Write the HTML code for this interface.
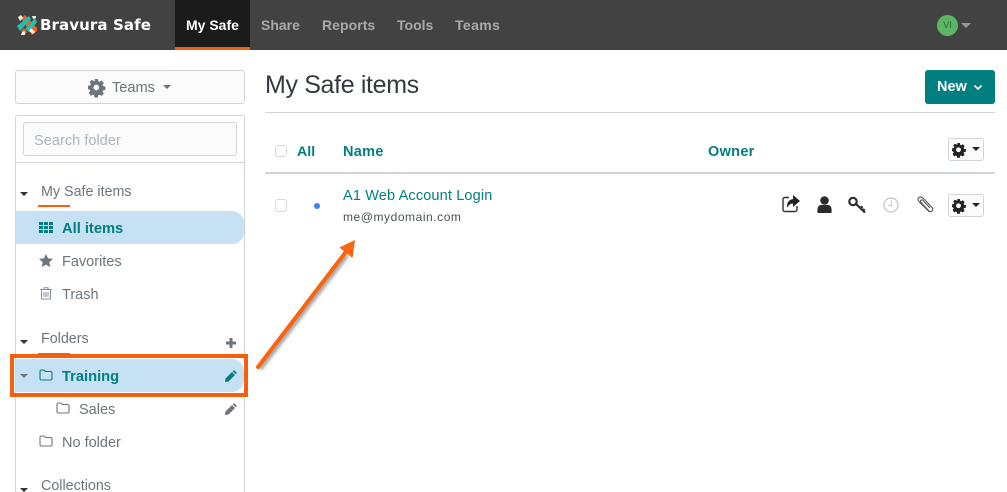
<!DOCTYPE html>
<html><head><meta charset="utf-8"><style>
html,body{margin:0;padding:0;width:1007px;height:492px;overflow:hidden;background:#fff}
body{position:relative;font-family:"Liberation Sans",sans-serif;font-size:15px;color:#6c757d}
.a{position:absolute;white-space:nowrap}
svg{position:absolute;overflow:visible}
.t{line-height:20px}
.teal{color:#017e80}
.b{font-weight:700}
.cb{position:absolute;width:10px;height:10px;border:1.500px solid #d5d9de;border-radius:3px;background:#fff}
.caret{position:absolute;width:0;height:0;border-left:4.5px solid transparent;border-right:4.5px solid transparent;border-top:4.5px solid #333}
</style></head><body>
<div class="a" style="left:0;top:0;width:1007px;height:50px;background:#424242"></div>
<div class="a" style="left:175px;top:0;width:75px;height:50px;background:#1b1b1b"></div>
<div class="a" style="left:175px;top:47px;width:75px;height:3px;background:#f5600f"></div>
<svg style="left:16px;top:14px" width="22" height="22" viewBox="0 0 22 22">
<path d="M5 4 L9 1 L21 14 L21 17 L16 21 Z" fill="#f4621f"/>
<path d="M1 12 L13 2 L15 5 L4 17 Z" fill="#1cc1b5"/>
<path d="M9 15 L19 4 L21 8 L13 18 Z" fill="#1cc1b5"/>
<path d="M5 17 L8 14 L11 18 L9 21 Z" fill="#f4621f"/>
<path d="M2 3 L5 1 L7 4 L4 7 Z M6 18 L9 17 L9 21 L5 21 Z M16 2 L20 2 L20 4 L17 5 Z M15 14 L19 18 L17 20 L13 17 Z" fill="#fff" opacity=".9"/>
</svg>
<div class="a t" style="left:40px;top:15px;color:#fff;font-family:'DejaVu Sans',sans-serif;font-size:15px;font-weight:700;letter-spacing:.1px">Bravura Safe</div>
<div class="a t b" style="left:186px;top:15px;color:#fff;font-size:14px;">My Safe</div>
<div class="a t b" style="left:261px;top:15px;color:#aaa;font-size:14px">Share</div>
<div class="a t b" style="left:322px;top:15px;color:#aaa;font-size:14px;letter-spacing:.05px">Reports</div>
<div class="a t b" style="left:397px;top:15px;color:#aaa;font-size:14px">Tools</div>
<div class="a t b" style="left:455px;top:15px;color:#aaa;font-size:14px;letter-spacing:.4px">Teams</div>
<div class="a" style="left:937px;top:15px;width:21px;height:21px;border-radius:50%;background:#5cb563;color:#2f6b36;font-size:9px;line-height:21px;text-align:center">VI</div>
<div class="caret" style="left:961px;top:23px;border-top-color:#999;border-left-width:5px;border-right-width:5px;border-top-width:5px"></div>

<div class="a" style="left:15px;top:70px;width:228px;height:32px;border:1px solid #ced4da;border-radius:3px;background:#fbfbfb"></div>
<svg style="left:88px;top:79px" width="17" height="17" viewBox="0 0 24 24"><path fill="#6c757d" d="M9.500 0h5l.6 3.400 2 .8 2.800-2 3.500 3.500-2 2.800.8 2 3.400.6v5l-3.400.6-.8 2 2 2.800-3.500 3.500-2.800-2-2 .8-.6 3.400h-5l-.6-3.400-2-.8-2.800 2L1.200 20.400l2-2.800-.8-2L0 15v-5l3.400-.6.8-2-2-2.800L5.700 1.100l2.800 2 2-.8z" transform="scale(.96)"/><circle cx="11.700" cy="12" r="4" fill="#fbfbfb"/></svg>
<div class="a t" style="left:112px;top:78px;font-size:14.6px">Teams</div>
<div class="caret" style="left:163px;top:85px;border-top-color:#6c757d"></div>

<div class="a" style="left:15px;top:115px;width:228px;height:377px;border:1px solid #ced4da;border-bottom:0;border-radius:3px 3px 0 0"></div>
<div class="a" style="left:16px;top:162px;width:228px;height:1px;background:#ced4da"></div>
<div class="a" style="left:23px;top:122px;width:212px;height:32px;border:1px solid #ced4da;border-radius:3px;background:#fbfbfb"></div>
<div class="a t" style="left:34px;top:131px;font-size:14.5px;color:#adb5bd;letter-spacing:.05px">Search folder</div>

<div class="caret" style="left:20px;top:192px"></div>
<div class="a t" style="left:41px;top:182px;font-size:14.3px;">My Safe items</div>
<div class="a" style="left:38px;top:205px;width:32px;height:2px;background:#f5600f"></div>
<div class="a" style="left:16px;top:211px;width:228px;height:33px;background:#c7e1f4;border-radius:0 12px 12px 0"></div>
<svg style="left:39px;top:222px" width="14" height="12"><path fill="#017e80" d="M0 0h4v3H0zM5 0h4v3H5zM10 0h4v3h-4zM0 4h4v3H0zM5 4h4v3H5zM10 4h4v3h-4zM0 8h4v3H0zM5 8h4v3H5zM10 8h4v3h-4z"/></svg>
<div class="a t b teal" style="left:62px;top:219px;font-size:14.7px">All items</div>
<svg style="left:39px;top:254px" width="14" height="13" viewBox="0 0 14 13"><path fill="#6c757d" d="M7 0l2 4.400 5 .5-3.700 3.300 1 4.800L7 10.600 2.700 13l1-4.800L0 4.900l5-.5z"/></svg>
<div class="a t" style="left:62px;top:252px;font-size:14.5px">Favorites</div>
<svg style="left:40px;top:287px" width="12" height="13" viewBox="0 0 12 13"><path fill="none" stroke="#8a939b" d="M1.500 3v9h9V3M0 2.500h12M4 2.500V.8h4v1.700M4 5v5M6 5v5M8 5v5"/></svg>
<div class="a t" style="left:62px;top:285px;font-size:14.5px">Trash</div>

<div class="caret" style="left:20px;top:340px"></div>
<div class="a t" style="left:41px;top:329px;font-size:14.3px">Folders</div>
<div class="a" style="left:38px;top:353px;width:32px;height:2px;background:#f5600f"></div>
<svg style="left:226px;top:338px" width="10" height="10"><path fill="#6c757d" d="M3.500 0h3v3.500H10v3H6.500V10h-3V6.500H0v-3h3.500z"/></svg>

<div class="a" style="left:16px;top:359px;width:228px;height:33px;background:#c7e1f4;border-radius:0 12px 12px 0"></div>
<div class="a" style="left:10px;top:354px;width:230px;height:35px;border:4px solid #f5600f"></div>
<div class="caret" style="left:20px;top:374px;border-top-color:#6c757d"></div>
<svg style="left:39px;top:369px" width="14" height="12" viewBox="0 0 14 12"><path fill="none" stroke="#017e80" stroke-width="1.100" d="M1 2.500Q1 1 2.500 1h2.500l1.500 1.500h5Q13 2.500 13 4v5.500Q13 11 11.500 11h-9Q1 11 1 9.500z"/></svg>
<div class="a t b teal" style="left:62px;top:367px;font-size:14.7px">Training</div>
<svg style="left:225px;top:370px" width="12" height="12" viewBox="0 0 12 12"><path fill="#017e80" d="M9 0l3 3-1.300 1.300-3-3zM7 2l3 3-6.500 6.500L0 12l.5-3.500z"/></svg>

<svg style="left:56px;top:402px" width="14" height="12" viewBox="0 0 14 12"><path fill="none" stroke="#6c757d" stroke-width="1.100" d="M1 2.500Q1 1 2.500 1h2.500l1.500 1.500h5Q13 2.500 13 4v5.500Q13 11 11.500 11h-9Q1 11 1 9.500z"/></svg>
<div class="a t" style="left:79px;top:400px;font-size:14.5px">Sales</div>
<svg style="left:225px;top:403px" width="12" height="12" viewBox="0 0 12 12"><path fill="#6c757d" d="M9 0l3 3-1.300 1.300-3-3zM7 2l3 3-6.500 6.500L0 12l.5-3.500z"/></svg>
<svg style="left:39px;top:435px" width="14" height="12" viewBox="0 0 14 12"><path fill="none" stroke="#6c757d" stroke-width="1.100" d="M1 2.500Q1 1 2.500 1h2.500l1.500 1.500h5Q13 2.500 13 4v5.500Q13 11 11.500 11h-9Q1 11 1 9.500z"/></svg>
<div class="a t" style="left:62px;top:433px;font-size:14.5px">No folder</div>
<div class="caret" style="left:20px;top:488px"></div>
<div class="a t" style="left:41px;top:476px;font-size:14.3px">Collections</div>

<svg style="left:0;top:0" width="1007" height="492"><defs><filter id="s" x="-30%" y="-30%" width="160%" height="160%"><feGaussianBlur stdDeviation="1.500"/></filter></defs>
<path d="M258 367L345 253" stroke="#999" stroke-width="4" fill="none" filter="url(#s)" transform="translate(2 2)"/>
<path d="M258 367L345 253" stroke="#f9650e" stroke-width="4" stroke-linecap="round" fill="none"/>
<path d="M355 240L352.500 258L339.500 247.500Z" fill="#f9650e"/></svg>

<div class="a" style="left:265px;top:69px;font-size:25px;line-height:32px;color:#343a40;letter-spacing:-.35px">My Safe items</div>
<div class="a" style="left:925px;top:70px;width:70px;height:34px;background:#017e80;border-radius:3px"></div>
<div class="a t b" style="left:937px;top:77px;color:#fff;font-size:14.5px">New</div>
<svg style="left:973px;top:84px" width="10" height="7"><path d="M1.500 1.500L5 5l3.500-3.500" stroke="#fff" stroke-width="1.600" fill="none"/></svg>
<div class="a" style="left:265px;top:112px;width:730px;height:1px;background:#ced4da"></div>

<div class="cb" style="left:275px;top:145px"></div>
<div class="a t b teal" style="left:297px;top:142px;font-size:14.2px">All</div>
<div class="a t b teal" style="left:343px;top:142px;font-size:14.5px;letter-spacing:.3px">Name</div>
<div class="a t b teal" style="left:708px;top:142px;font-size:14.5px;letter-spacing:.3px">Owner</div>
<div class="a" style="left:948px;top:138px;width:34px;height:21px;border:1px solid #ced4da;border-radius:3px;background:#fbfbfb"></div>
<svg style="left:952px;top:143px" width="13" height="13" viewBox="0 0 24 24"><path fill="#222" d="M9.500 0h5l.6 3.400 2 .8 2.800-2 3.500 3.500-2 2.800.8 2 3.400.6v5l-3.400.6-.8 2 2 2.800-3.500 3.500-2.800-2-2 .8-.6 3.400h-5l-.6-3.400-2-.8-2.800 2L1.200 20.400l2-2.800-.8-2L0 15v-5l3.400-.6.8-2-2-2.800L5.700 1.100l2.800 2 2-.8z"/><circle cx="12" cy="12.500" r="4.500" fill="#fbfbfb"/></svg>
<div class="caret" style="left:972px;top:147px;border-left-width:4px;border-right-width:4px;border-top-width:4px;border-top-color:#222"></div>
<div class="a" style="left:265px;top:172px;width:730px;height:2px;background:#ced4da"></div>

<div class="cb" style="left:275px;top:199px;height:11px"></div>
<div class="a" style="left:314px;top:203px;width:6px;height:6px;border-radius:50%;background:#3b82f6"></div>
<div class="a t teal" style="left:343px;top:186px;font-size:14.5px;letter-spacing:.15px">A1 Web Account Login</div>
<div class="a t" style="left:343px;top:207px;font-size:12px;color:#495057;letter-spacing:.55px">me@mydomain.com</div>

<svg style="left:782px;top:195px" width="18" height="18" viewBox="0 0 18 18"><path fill="none" stroke="#333" stroke-width="1.400" d="M7 2.500H3Q1 2.500 1 4.500v10Q1 16.500 3 16.500h10Q15 16.500 15 14.500V11"/><path fill="#222" d="M11 0l7 6-7 6V8.500Q7 8.500 5 13 4.500 5 11 4z"/></svg>
<svg style="left:817px;top:196px" width="15" height="17" viewBox="0 0 15 17"><circle cx="7.500" cy="4.500" r="4.300" fill="#2b2b2b"/><path fill="#2b2b2b" d="M1 17Q0 17 .5 13 1 9 4 9h7q3 0 3.500 4 .5 4-.5 4z"/></svg>
<svg style="left:848px;top:196px" width="18" height="18" viewBox="0 0 18 18"><circle cx="5" cy="5.500" r="3.700" fill="none" stroke="#2b2b2b" stroke-width="2.200"/><path d="M8 8L17 16.500M12.500 12.300l2-2M15 14.500l1.500-1.500" stroke="#2b2b2b" stroke-width="2.200" fill="none"/></svg>
<svg style="left:883px;top:197px" width="16" height="16"><circle cx="8" cy="8" r="7" fill="none" stroke="#cfcfcf" stroke-width="1.600"/><path d="M8.500 3.500V8.500H5" stroke="#cfcfcf" stroke-width="1.200" fill="none"/></svg>
<svg style="left:917px;top:196px" width="16" height="18" viewBox="0 0 16 18"><path fill="none" stroke="#555" stroke-width="1.100" d="M12.500 16L2 5.500Q0 3 2 1.500 4 0 6.500 2.500L15 11.500Q16.500 13.500 15 15 13.500 16.500 11.500 14.500L4 6.500Q3 5 4 4 5 3.500 6 4.500l7 7.500"/></svg>
<div class="a" style="left:948px;top:194px;width:34px;height:21px;border:1px solid #ced4da;border-radius:3px;background:#fbfbfb"></div>
<svg style="left:952px;top:199px" width="13" height="13" viewBox="0 0 24 24"><path fill="#222" d="M9.500 0h5l.6 3.400 2 .8 2.800-2 3.500 3.500-2 2.800.8 2 3.400.6v5l-3.400.6-.8 2 2 2.800-3.500 3.500-2.800-2-2 .8-.6 3.400h-5l-.6-3.400-2-.8-2.800 2L1.200 20.400l2-2.800-.8-2L0 15v-5l3.400-.6.8-2-2-2.800L5.700 1.100l2.800 2 2-.8z"/><circle cx="12" cy="12.500" r="4.500" fill="#fbfbfb"/></svg>
<div class="caret" style="left:972px;top:203px;border-left-width:4px;border-right-width:4px;border-top-width:4px;border-top-color:#222"></div>
</body></html>
